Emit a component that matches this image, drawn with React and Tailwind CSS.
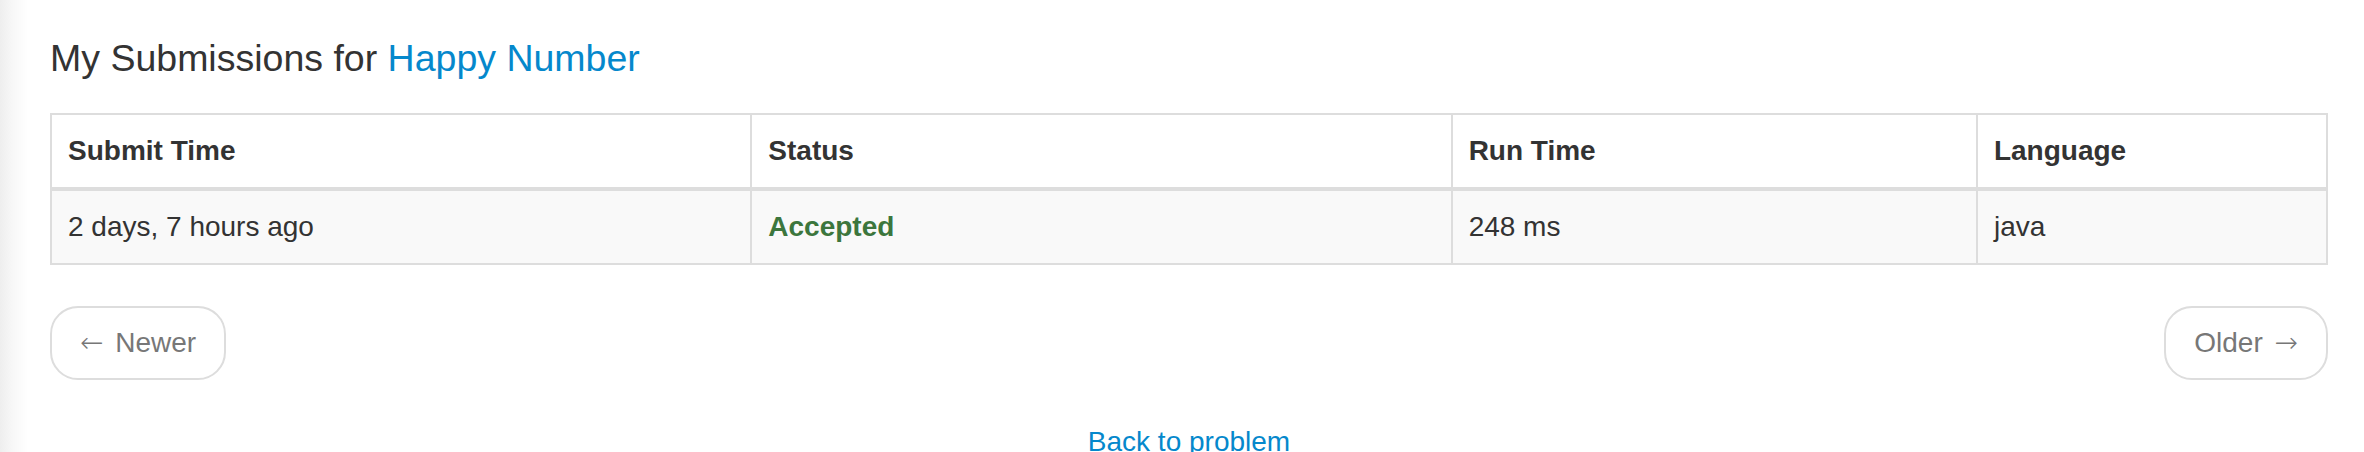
import React from 'react';

const rows = [
  { time: '2 days, 7 hours ago', status: 'Accepted', runtime: '248 ms', lang: 'java' },
];

export default function App() {
  return (
    <div className="min-h-[452px] w-[2364px] bg-[linear-gradient(to_right,#eeeeee_0px,#f7f7f7_12px,#ffffff_28px)] font-['Liberation_Sans',Arial,sans-serif] text-[#333]">
      <div className="ml-[50px] w-[2278px] pt-[36px]">
        <h3 className="text-[37.5px] leading-[44px] font-normal">
          My Submissions for <a className="text-[#0588cc]">Happy Number</a>
        </h3>

        {/* submissions table */}
        <table className="mt-[33px] w-full table-fixed border-collapse border-2 border-[#ddd] text-[28px] leading-[40px]">
          <thead>
            <tr className="bg-white">
              <th className="w-[30.77%] border-2 border-b-4 border-[#ddd] p-[16px] text-left font-bold">Submit Time</th>
              <th className="w-[30.77%] border-2 border-b-4 border-[#ddd] p-[16px] text-left font-bold">Status</th>
              <th className="w-[23.08%] border-2 border-b-4 border-[#ddd] p-[16px] text-left font-bold">Run Time</th>
              <th className="w-[15.38%] border-2 border-b-4 border-[#ddd] p-[16px] text-left font-bold">Language</th>
            </tr>
          </thead>
          <tbody>
            {rows.map((r, i) => (
              <tr key={i} className="bg-[#f9f9f9]">
                <td className="border-2 border-[#ddd] p-[16px]">{r.time}</td>
                <td className="border-2 border-[#ddd] p-[16px] font-bold text-[#3c763d]">{r.status}</td>
                <td className="border-2 border-[#ddd] p-[16px]">{r.runtime}</td>
                <td className="border-2 border-[#ddd] p-[16px]">{r.lang}</td>
              </tr>
            ))}
          </tbody>
        </table>

        {/* pager */}
        <div className="mt-[41px] flex justify-between text-[28px] leading-[40px] text-[#777]">
          <a className="rounded-[28px] border-2 border-[#ddd] bg-white px-[28px] py-[15px]">
            <span className="mr-[4px] font-['DejaVu_Sans'] font-light">←</span> Newer
          </a>
          <a className="rounded-[28px] border-2 border-[#ddd] bg-white px-[28px] py-[15px]">
            Older <span className="ml-[4px] font-['DejaVu_Sans'] font-light">→</span>
          </a>
        </div>

        <div className="mt-[42px] text-center text-[28px] leading-[40px]">
          <a className="text-[#0588cc]">Back to problem</a>
        </div>
      </div>
    </div>
  );
}
